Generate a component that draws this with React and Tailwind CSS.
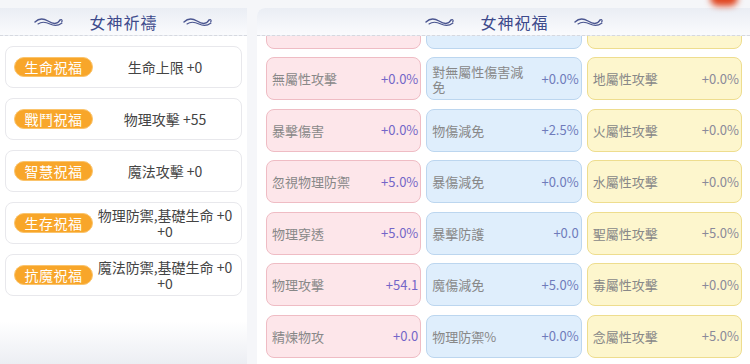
import React from 'react';

const FONT = { fontFamily: '"Noto Sans CJK TC", "Noto Sans", sans-serif' };

const prayers = [
  { name: '生命祝福', value: ['生命上限 +0'] },
  { name: '戰鬥祝福', value: ['物理攻擊 +55'] },
  { name: '智慧祝福', value: ['魔法攻擊 +0'] },
  { name: '生存祝福', value: ['物理防禦,基礎生命 +0', '+0'] },
  { name: '抗魔祝福', value: ['魔法防禦,基礎生命 +0', '+0'] },
];

const pink = [
  ['', ''],
  ['無屬性攻擊', '+0.0%'],
  ['暴擊傷害', '+0.0%'],
  ['忽視物理防禦', '+5.0%'],
  ['物理穿透', '+5.0%'],
  ['物理攻擊', '+54.1'],
  ['精煉物攻', '+0.0'],
];
const blue = [
  ['', ''],
  ['對無屬性傷害減免', '+0.0%'],
  ['物傷減免', '+2.5%'],
  ['暴傷減免', '+0.0%'],
  ['暴擊防護', '+0.0'],
  ['魔傷減免', '+5.0%'],
  ['物理防禦%', '+0.0%'],
];
const yellow = [
  ['', ''],
  ['地屬性攻擊', '+0.0%'],
  ['火屬性攻擊', '+0.0%'],
  ['水屬性攻擊', '+0.0%'],
  ['聖屬性攻擊', '+5.0%'],
  ['毒屬性攻擊', '+0.0%'],
  ['念屬性攻擊', '+5.0%'],
];

const tones = {
  pink: 'bg-[#fde6ea] border-[#efbcc4] text-[#7466c8]',
  blue: 'bg-[#dfeefc] border-[#bcd6ef] text-[#6f7bbb]',
  yellow: 'bg-[#fdf6cd] border-[#eedd8e] text-[#8a8a9a]',
};

function Swoosh() {
  return (
    <svg width="30" height="12" viewBox="0 0 30 12">
      <path d="M1 6 C5 2, 9 2, 14 5 S23 9, 26 4" fill="none" stroke="#4a5590" strokeWidth="1.4" strokeLinecap="round" />
      <path d="M4 8 C8 5, 12 6, 16 8 S24 10, 28 7" fill="none" stroke="#4a5590" strokeWidth="1.1" strokeLinecap="round" />
      <path d="M26 4 C28 3, 29 5, 27.5 6" fill="none" stroke="#4a5590" strokeWidth="1.1" strokeLinecap="round" />
    </svg>
  );
}

function Header({ title, className }) {
  return (
    <div className={`h-[28px] flex items-center justify-center gap-[25px] border-b border-dashed border-[#d6d9e0] bg-[linear-gradient(to_bottom,#eaedf4,#fafbfd)] ${className}`}>
      <Swoosh />
      <span className="text-[16px] text-[#3d4a8c] tracking-[1px]">{title}</span>
      <Swoosh />
    </div>
  );
}

function StatCard({ label, value, tone }) {
  return (
    <div className={`rounded-[8px] border-[1.5px] flex items-center gap-2 pl-[5px] pr-[2px] ${tones[tone]}`}>
      <span className="flex-1 min-w-0 text-[13px] leading-[15px] text-[#888]">{label}</span>
      <span className="shrink-0 text-[13px]">{value}</span>
    </div>
  );
}

export default function App() {
  const rows = pink.map((p, i) => [p, blue[i], yellow[i]]);
  return (
    <div style={FONT} className="relative w-[750px] h-[364px] overflow-hidden bg-[#f5f6f9] flex gap-[10px] pt-[8px]">
      <div className="absolute top-[-10px] right-[12px] w-[28px] h-[16px] rounded-full bg-[#e0451f] blur-[3px]" />

      <div className="w-[247px] shrink-0 flex flex-col bg-[linear-gradient(to_bottom,#fff_88%,#eceef3)]">
        <Header title="女神祈禱" className="" />
        <div className="flex flex-col gap-[10px] px-[5px] pt-[10px]">
          {prayers.map((p) => (
            <div key={p.name} className="h-[42px] rounded-[8px] border border-[#e8e8ec] bg-white flex items-center pl-[8px] pr-[4px]">
              <span className="w-[79px] h-[20px] shrink-0 rounded-full bg-[#f8a62a] border border-[#fbc46c] text-white text-[14px] flex items-center justify-center tracking-[0.5px]">
                {p.name}
              </span>
              <div className="flex-1 flex flex-col items-center text-[14px] leading-[16px] text-[#444]">
                {p.value.map((v, i) => (
                  <span key={i}>{v}</span>
                ))}
              </div>
            </div>
          ))}
        </div>
      </div>

      <div className="flex-1 flex flex-col bg-white rounded-tl-[8px] overflow-hidden">
        <Header title="女神祝福" className="pl-[22px]" />
        <div className="flex-1 overflow-hidden pl-[9px] pr-[8px]">
          <div className="grid grid-cols-3 gap-x-[5px] gap-y-[8.5px] auto-rows-[43px] mt-[-30.5px]">
            {rows.map((r, i) => (
              <React.Fragment key={i}>
                <StatCard label={r[0][0]} value={r[0][1]} tone="pink" />
                <StatCard label={r[1][0]} value={r[1][1]} tone="blue" />
                <StatCard label={r[2][0]} value={r[2][1]} tone="yellow" />
              </React.Fragment>
            ))}
          </div>
        </div>
      </div>
    </div>
  );
}
